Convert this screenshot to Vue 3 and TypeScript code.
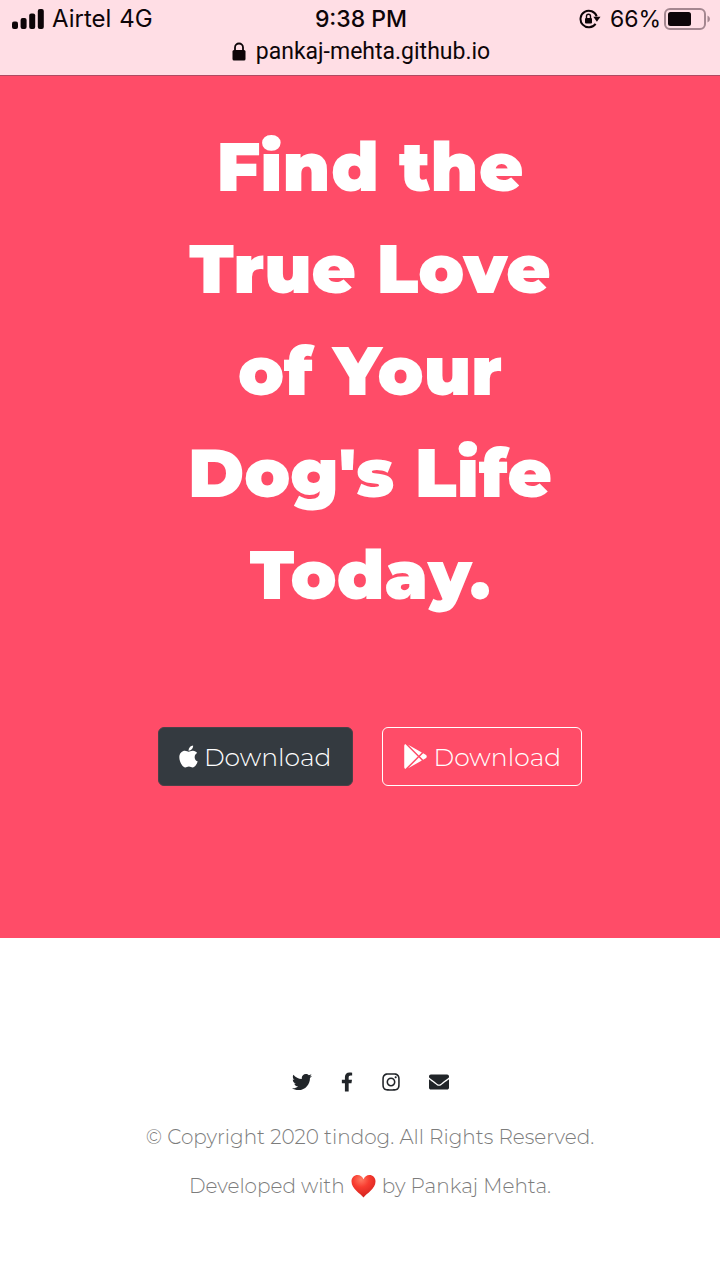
<script setup lang="ts">
interface SocialLink {
  label: string
  viewBox: string
  kind: string
  path: string
}

const titleLines: string[] = ['Find the', 'True Love', 'of Your', "Dog's Life", 'Today.']

const social: SocialLink[] = [
  {
    label: 'Twitter',
    viewBox: '0 0 512 512',
    kind: 'wide',
    path: 'M459.37 151.716c.325 4.548.325 9.097.325 13.645 0 138.72-105.583 298.558-298.558 298.558-59.452 0-114.68-17.219-161.137-47.106 8.447.974 16.568 1.299 25.34 1.299 49.055 0 94.213-16.568 130.274-44.832-46.132-.975-84.792-31.188-98.112-72.772 6.498.974 12.995 1.624 19.818 1.624 9.421 0 18.843-1.3 27.614-3.573-48.081-9.747-84.143-51.98-84.143-102.985v-1.299c13.969 7.797 30.214 12.67 47.431 13.319-28.264-18.843-46.781-51.005-46.781-87.391 0-19.492 5.197-37.36 14.294-52.954 51.655 63.675 129.3 105.258 216.365 109.807-1.624-7.797-2.599-15.918-2.599-24.04 0-57.828 46.782-104.934 104.934-104.934 30.213 0 57.502 12.67 76.67 33.137 23.715-4.548 46.456-13.32 66.599-25.34-7.798 24.366-24.366 44.833-46.132 57.827 21.117-2.273 41.584-8.122 60.426-16.243-14.292 20.791-32.161 39.308-52.628 54.253z',
  },
  {
    label: 'Facebook',
    viewBox: '0 0 320 512',
    kind: 'slim',
    path: 'M279.14 288l14.22-92.66h-88.91v-60.13c0-25.35 12.42-50.06 52.24-50.06h40.42V6.26S260.43 0 225.36 0c-73.22 0-121.08 44.38-121.08 124.72v70.62H22.89V288h81.39v224h100.17V288z',
  },
  {
    label: 'Instagram',
    viewBox: '0 0 448 512',
    kind: 'medium',
    path: 'M224.1 141c-63.6 0-114.9 51.3-114.9 114.9s51.3 114.9 114.9 114.9S339 319.5 339 255.9 287.7 141 224.1 141zm0 189.6c-41.1 0-74.7-33.5-74.7-74.7s33.5-74.7 74.7-74.7 74.7 33.5 74.7 74.7-33.6 74.7-74.7 74.7zm146.4-194.3c0 14.9-12 26.8-26.8 26.8-14.9 0-26.8-12-26.8-26.8s12-26.8 26.8-26.8 26.8 12 26.8 26.8zm76.1 27.2c-1.7-35.9-9.9-67.7-36.2-93.9-26.2-26.2-58-34.4-93.9-36.2-37-2.1-147.9-2.1-184.9 0-35.8 1.7-67.6 9.9-93.9 36.1s-34.4 58-36.2 93.9c-2.1 37-2.1 147.9 0 184.9 1.7 35.9 9.9 67.7 36.2 93.9s58 34.4 93.9 36.2c37 2.1 147.9 2.1 184.9 0 35.9-1.7 67.7-9.9 93.9-36.2 26.2-26.2 34.4-58 36.2-93.9 2.1-37 2.1-147.8 0-184.8zM398.8 388c-7.8 19.6-22.9 34.7-42.6 42.6-29.5 11.7-99.5 9-132.1 9s-102.7 2.6-132.1-9c-19.6-7.8-34.7-22.9-42.6-42.6-11.7-29.5-9-99.5-9-132.1s-2.6-102.7 9-132.1c7.8-19.6 22.9-34.7 42.6-42.6 29.5-11.7 99.5-9 132.1-9s102.7-2.6 132.1 9c19.6 7.8 34.7 22.9 42.6 42.6 11.7 29.5 9 99.5 9 132.1s2.7 102.7-9 132.1z',
  },
  {
    label: 'Email',
    viewBox: '0 0 512 512',
    kind: 'wide',
    path: 'M502.3 190.8c3.9-3.1 9.7-.2 9.7 4.7V400c0 26.5-21.5 48-48 48H48c-26.5 0-48-21.5-48-48V195.6c0-5 5.7-7.8 9.7-4.7 22.4 17.4 52.1 39.5 154.1 113.6 21.1 15.4 56.7 47.8 92.2 47.6 35.7.3 72-32.8 92.3-47.6 102-74.1 131.6-96.3 154-113.7zM256 320c23.2.4 56.6-29.2 73.4-41.4 132.7-96.3 142.8-104.7 173.4-128.7 5.8-4.5 9.2-11.5 9.2-18.9v-19c0-26.5-21.5-48-48-48H48c-26.5 0-48 21.5-48 48v19c0 7.4 3.4 14.3 9.2 18.9 30.6 23.9 40.7 32.4 173.4 128.7 16.8 12.2 50.2 41.8 73.4 41.4z',
  },
]
</script>

<template>
  <div class="page">
    <header class="bar">
      <div class="status">
        <div class="side">
          <svg class="signal" viewBox="0 0 32 20" aria-hidden="true">
            <rect x="0" y="12.5" width="6" height="7.5" rx="2" />
            <rect x="8.6" y="9" width="6" height="11" rx="2" />
            <rect x="17.2" y="4.5" width="6" height="15.5" rx="2" />
            <rect x="25.8" y="0" width="6" height="20" rx="2" />
          </svg>
          <span>Airtel</span>
          <span>4G</span>
        </div>
        <time class="clock">9:38 PM</time>
        <div class="side end">
          <svg class="rotation" viewBox="0 0 22 20" aria-hidden="true">
            <path d="M16.6 14.8A8.3 8.3 0 1 1 17.7 7.4" fill="none" stroke="#0d0508" stroke-width="2" />
            <path d="M14.3 7.8h7.2l-3.6 5z" />
            <rect x="6" y="9" width="7" height="5.6" rx="1" />
            <path d="M7.5 9V7.3a2 2 0 0 1 4 0V9" fill="none" stroke="#0d0508" stroke-width="1.4" />
          </svg>
          <span class="percent">66%</span>
          <svg class="battery" viewBox="0 0 46 22" aria-hidden="true">
            <rect x="1" y="1" width="40" height="20" rx="5" fill="none" stroke="#a48790" stroke-width="2" />
            <rect x="4" y="4" width="23" height="14" rx="2.5" />
            <path d="M43.5 7.5q2.5 1 2.5 3.5t-2.5 3.5z" fill="#a48790" />
          </svg>
        </div>
      </div>
      <div class="address">
        <svg class="lock" viewBox="0 0 14 19" aria-hidden="true">
          <rect x="0.5" y="8" width="13" height="10.5" rx="1.5" />
          <path d="M3 9V5.5a4 4 0 0 1 8 0V9" fill="none" stroke="#0d0508" stroke-width="1.8" />
        </svg>
        <span>pankaj-mehta.github.io</span>
      </div>
    </header>

    <main class="hero">
      <h1>
        <span v-for="line in titleLines" :key="line" class="line">{{ line }}</span>
      </h1>
      <div class="actions">
        <button type="button" class="btn dark">
          <svg class="apple" viewBox="0 0 384 512" aria-hidden="true">
            <path d="M318.7 268.7c-.2-36.7 16.4-64.4 50-84.8-18.8-26.9-47.2-41.7-84.7-44.6-35.5-2.8-74.3 20.7-88.5 20.7-15 0-49.4-19.7-76.4-19.7C63.3 141.2 4 184.8 4 273.5q0 39.3 14.4 81.2c12.8 36.7 59 126.7 107.2 125.2 25.2-.6 43-17.9 75.8-17.9 31.8 0 48.3 17.9 76.4 17.9 48.6-.7 90.4-82.5 102.6-119.3-65.2-30.7-61.7-90-61.7-91.9zm-56.6-164.2c27.3-32.4 24.8-61.9 24-72.5-24.1 1.4-52 16.4-67.9 34.9-17.5 19.8-27.8 44.3-25.6 71.9 26.1 2 49.9-11.4 69.5-34.3z" />
          </svg>
          <span>Download</span>
        </button>
        <button type="button" class="btn outline">
          <svg class="play" viewBox="0 0 512 512" aria-hidden="true">
            <path d="M325.3 234.3L104.6 13l280.8 161.2-60.1 60.1zM47 0C34 6.8 25.3 19.2 25.3 35.3v441.3c0 16.1 8.7 28.5 21.7 35.3l256.6-256L47 0zm425.2 225.6l-58.9-34.1-65.7 64.5 65.7 64.5 60.1-34.1c18-14.3 18-46.5-1.2-60.8zM104.6 499l280.8-161.2-60.1-60.1L104.6 499z" />
          </svg>
          <span>Download</span>
        </button>
      </div>
    </main>

    <footer class="footer">
      <nav class="social" aria-label="Social links">
        <a v-for="item in social" :key="item.label" href="#" :aria-label="item.label">
          <svg :class="item.kind" :viewBox="item.viewBox" aria-hidden="true"><path :d="item.path" /></svg>
        </a>
      </nav>
      <p>© Copyright 2020 tindog. All Rights Reserved.</p>
      <p class="credit">
        <span>Developed with</span>
        <svg class="heart" viewBox="0 0 24 24" role="img" aria-label="love">
          <defs>
            <radialGradient id="heartFill" cx="0.4" cy="0.2" r="0.85">
              <stop offset="0" stop-color="#ff7a62" />
              <stop offset="0.4" stop-color="#f83c30" />
              <stop offset="1" stop-color="#cf1f1c" />
            </radialGradient>
          </defs>
          <path fill="url(#heartFill)" d="M12 23.5C9 19.5 0 15 0 7.5 0 3.5 2.8 1 6 1c2.8 0 5 1.7 6 4.2C13 2.7 15.2 1 18 1c3.2 0 6 2.5 6 6.5 0 7.5-9 12-12 16z" />
        </svg>
        <span>by Pankaj Mehta.</span>
      </p>
    </footer>
  </div>
</template>

<style>
body {
  margin: 0;
  background: #fff;
}
</style>

<style scoped>
.page {
  min-height: 100vh;
  background: #fff;
  font-family: Montserrat, Inter, "Liberation Sans", sans-serif;
}
.bar {
  box-sizing: border-box;
  padding: 4px 10px 6px 12px;
  border-bottom: 1px solid #b04a62;
  background: #ffdee5;
  color: #0d0508;
  fill: #0d0508;
  font-family: Inter, "Liberation Sans", sans-serif;
}
.status {
  display: grid;
  grid-template-columns: 1fr auto 1fr;
  align-items: center;
  height: 30px;
  font-size: 24px;
  line-height: 30px;
}
.side {
  display: flex;
  align-items: center;
  gap: 8px;
}
.end {
  justify-content: flex-end;
  gap: 3px;
}
.clock {
  font-size: 23px;
  font-weight: 500;
}
.percent {
  font-size: 23px;
}
.signal {
  width: 32px;
  height: 20px;
}
.rotation {
  width: 22px;
  height: 20px;
  margin-right: 6px;
}
.battery {
  width: 46px;
  height: 22px;
}
.address {
  display: flex;
  align-items: center;
  justify-content: center;
  gap: 10px;
  height: 35px;
  font-family: Roboto, Inter, sans-serif;
  font-size: 23px;
  line-height: 35px;
}
.lock {
  width: 14px;
  height: 19px;
}
.hero {
  padding: 40px 0 152px 20px;
  background: #ff4c68;
  color: #fff;
}
h1 {
  margin: 0;
  font-size: 68px;
  font-weight: 900;
  line-height: 102px;
  text-align: center;
}
.line {
  display: block;
}
.actions {
  display: flex;
  justify-content: center;
  gap: 29px;
  margin-top: 101px;
}
.btn {
  display: flex;
  align-items: center;
  gap: 6px;
  box-sizing: border-box;
  height: 59px;
  padding: 0 20px;
  border: 1px solid #fff;
  border-radius: 6px;
  background: transparent;
  color: #fff;
  fill: #fff;
  font-family: inherit;
  font-size: 25px;
  font-weight: 300;
  line-height: 38px;
}
.dark {
  border-color: #4b4048;
  background: #343a40;
}
.apple {
  width: 19px;
  height: 25px;
}
.play {
  width: 25px;
  height: 25px;
}
.footer {
  padding: 134px 0 64px 20px;
  color: #7c7c7c;
  font-size: 20px;
  font-weight: 300;
  line-height: 30px;
  text-align: center;
}
.social {
  display: flex;
  justify-content: center;
  gap: 29px;
  height: 20px;
}
.social a {
  display: flex;
  fill: #212529;
}
.wide {
  width: 20px;
  height: 20px;
}
.slim {
  width: 12px;
  height: 20px;
}
.medium {
  width: 18px;
  height: 20px;
}
p {
  margin: 30px 0 0;
}
.credit {
  display: flex;
  align-items: center;
  justify-content: center;
  gap: 6px;
  margin-top: 19px;
}
.heart {
  width: 25px;
  height: 24px;
}
</style>
